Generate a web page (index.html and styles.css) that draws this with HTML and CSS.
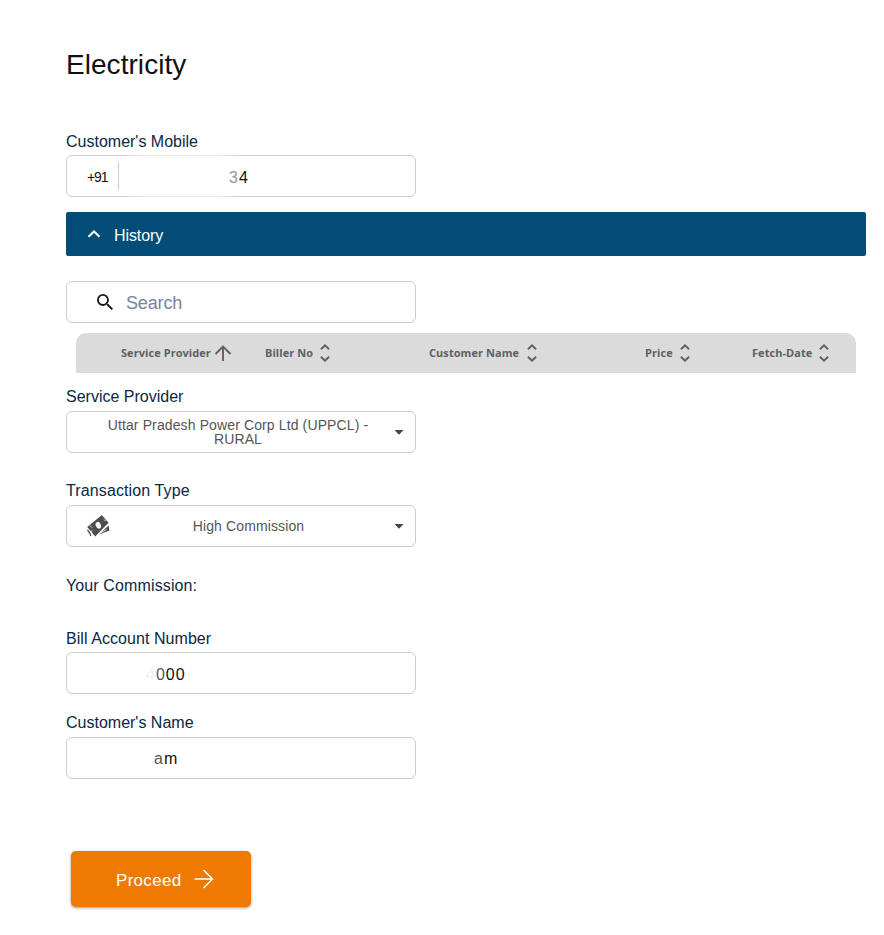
FILE: index.html
```html
<!DOCTYPE html>
<html lang="en">
<head>
<meta charset="utf-8">
<title>Electricity</title>
<link rel="stylesheet" href="styles.css">
</head>
<body>
<main class="page">
  <h1 class="title">Electricity</h1>

  <label class="label label-mobile">Customer's Mobile</label>
  <div class="field field-mobile">
    <span class="prefix">+91</span>
    <span class="value mobile-value"><span class="faded">3</span>4</span>
  </div>

  <div class="history">
    <svg class="chevron" viewBox="0 0 14 8"><path d="M1.500 6.700 7 1.500l5.500 5.200" fill="none" stroke="#fff" stroke-width="2"/></svg>
    <span>History</span>
  </div>

  <div class="field search">
    <svg class="search-icon" viewBox="3 3 17.500 17.500"><path fill="#15181f" d="M15.500 14h-.79l-.28-.27A6.471 6.471 0 0 0 16 9.500 6.500 6.500 0 1 0 9.500 16c1.610 0 3.090-.59 4.230-1.570l.27.28v.79l5 4.990L20.490 19l-4.990-5zm-6 0C7.010 14 5 11.990 5 9.500S7.010 5 9.500 5 14 7.010 14 9.500 11.990 14 9.500 14z"/></svg>
    <span class="placeholder">Search</span>
  </div>

  <div class="table-head">
    <div class="col col-provider"><span>Service Provider</span><svg class="arrow-up" viewBox="0 0 18 16"><path d="M9 16V1.500M1.500 9 9 1.500 16.500 9" fill="none" stroke="#606060" stroke-width="1.900"/></svg></div>
    <div class="col col-biller"><span>Biller No</span><svg class="sort" viewBox="0 0 10 18"><path d="M.9 5.200 5 1.300l4.100 3.900M.9 12.800 5 16.700l4.100-3.900" fill="none" stroke="#606060" stroke-width="1.900"/></svg></div>
    <div class="col col-name"><span>Customer Name</span><svg class="sort" viewBox="0 0 10 18"><path d="M.9 5.200 5 1.300l4.100 3.900M.9 12.800 5 16.700l4.100-3.900" fill="none" stroke="#606060" stroke-width="1.900"/></svg></div>
    <div class="col col-price"><span>Price</span><svg class="sort" viewBox="0 0 10 18"><path d="M.9 5.200 5 1.300l4.100 3.900M.9 12.800 5 16.700l4.100-3.900" fill="none" stroke="#606060" stroke-width="1.900"/></svg></div>
    <div class="col col-date"><span>Fetch-Date</span><svg class="sort" viewBox="0 0 10 18"><path d="M.9 5.200 5 1.300l4.100 3.900M.9 12.800 5 16.700l4.100-3.900" fill="none" stroke="#606060" stroke-width="1.900"/></svg></div>
  </div>

  <label class="label label-provider">Service Provider</label>
  <div class="field select">
    <span class="select-text provider-text">Uttar Pradesh Power Corp Ltd (UPPCL) -<br>RURAL</span>
    <svg class="caret" viewBox="0 0 10 5"><path d="M.5 0h9L5 4.800z" fill="#454545"/></svg>
  </div>

  <label class="label label-type">Transaction Type</label>
  <div class="field select">
    <svg class="cash" viewBox="0 0 24 24">
      <path fill="#4d4d4d" d="M22.500 11.500 23.500 16.500 13 20.500z"/>
      <path fill="#4d4d4d" stroke="#fff" stroke-width=".5" d="M15.800.8 22.800 8.800 9.200 22.800 1 13z"/>
      <path fill="none" stroke="#fff" stroke-width=".8" d="m14.500 19 6-3.500M4 11.500l2 2.200M18 5.500l1.300 1.500M3.500 18.500l3-2"/>
      <path fill="none" stroke="#4d4d4d" stroke-width="1.300" d="M1.500 16 4 19.500 4.800 22"/>
      <ellipse cx="12.300" cy="11.300" rx="2.500" ry="3.500" transform="rotate(-25 12.300 11.300)" fill="#fff"/>
    </svg>
    <span class="select-text type-text">High Commission</span>
    <svg class="caret" viewBox="0 0 10 5"><path d="M.5 0h9L5 4.800z" fill="#454545"/></svg>
  </div>

  <p class="label label-commission">Your Commission:</p>

  <label class="label label-bill">Bill Account Number</label>
  <div class="field">
    <span class="value bill-value"><span class="trace">4</span><span class="leading">0</span>00</span>
  </div>

  <label class="label label-name">Customer's Name</label>
  <div class="field">
    <span class="value name-value"><span class="leading">a</span>m</span>
  </div>

  <button class="proceed" type="button">
    <span>Proceed</span>
    <svg class="arrow-right" viewBox="0 0 20 20"><path d="M.5 10h17.800M9.500 1 18.500 10l-9 9" fill="none" stroke="#fff" stroke-width="1.500"/></svg>
  </button>
</main>
</body>
</html>
```
FILE: styles.css
```css
* { box-sizing: border-box; }
body {
  margin: 0;
  background: #fff;
  color: #111;
  font-family: "Liberation Sans", Arial, sans-serif;
}
svg { display: block; flex: none; }
.page {
  display: flex;
  flex-direction: column;
  align-items: flex-start;
  height: 935px;
  padding: 45px 18px 0 66px;
  overflow: hidden;
}
.title { margin: 0; height: 40px; font-size: 28px; font-weight: 400; line-height: 40px; letter-spacing: 0.05px; }
.label { margin: 0; height: 20px; color: #0c2742; font-size: 16px; line-height: 20px; white-space: nowrap; }
.label-mobile { margin: 47px 0 3px; }
.label-provider { margin: 14px 0 4px; }
.label-type { margin: 28px 0 4px; letter-spacing: 0.12px; }
.label-commission { margin-top: 29px; letter-spacing: 0.12px; }
.label-bill { margin: 33px 0 3px; letter-spacing: 0.06px; }
.label-name { margin: 19px 0 4px; }
.field {
  display: flex;
  align-items: center;
  flex: none;
  width: 350px;
  height: 42px;
  border: 1px solid #ccc;
  border-radius: 6px;
  background: #fff;
}
/* Soft fade along the field's edges behind the number */
.field-mobile { position: relative; }
.field-mobile::before,
.field-mobile::after {
  content: "";
  position: absolute;
  left: 52px;
  width: 125px;
  height: 1px;
  background: linear-gradient(90deg, transparent, rgba(255, 255, 255, .55) 20%, rgba(255, 255, 255, .55) 80%, transparent);
}
.field-mobile::before { top: -1px; }
.field-mobile::after { bottom: -1px; }
.prefix {
  display: flex;
  align-items: center;
  width: 52px;
  height: 28px;
  padding: 2px 0 0 20px;
  border-right: 1px solid #ccc;
  font-size: 14px;
  letter-spacing: -1.1px;
}
.value { padding-top: 4px; font-size: 16px; letter-spacing: 1px; }
.mobile-value { margin-left: 110px; }
.bill-value { margin-left: 79px; }
.name-value { padding-top: 2px; margin-left: 87px; }
.faded { color: #999; }
.leading { color: #555; }
.trace { color: #f1f1f1; }
.history {
  display: flex;
  align-items: center;
  width: 800px;
  height: 44px;
  margin: 15px 0 25px;
  padding: 4px 0 0 21px;
  border-radius: 2px;
  background: #024d78;
  color: #fff;
  font-size: 16px;
  letter-spacing: -0.1px;
}
.chevron { width: 14px; height: 8px; margin: -4px 13px 0 0; }
.search { padding-left: 30px; }
.search-icon { width: 16px; height: 16px; margin: -1px 13px 0 0; }
.placeholder { padding-top: 2px; color: #75839f; font-size: 18px; letter-spacing: -0.15px; }
.table-head {
  display: grid;
  grid-template-columns: 189px 164px 216px 107px 104px;
  width: 780px;
  height: 40px;
  margin: 10px 0 0 10px;
  border-radius: 10px 10px 0 0;
  background: #dbdbdb;
  color: #606060;
  font: 700 11px "Open Sans", "Noto Sans", sans-serif;
  letter-spacing: 0.06px;
}
.col { display: flex; align-items: center; white-space: nowrap; }
.col span { margin-top: -2px; }
.col-provider { padding-left: 45px; }
.arrow-up { width: 18px; height: 16px; margin-left: 3px; }
.sort { width: 10px; height: 18px; margin-left: 7px; }
.col-name .sort { margin-left: 8px; }
.select { padding-right: 11px; }
.select-text { flex: 1; color: #555; font-size: 14px; line-height: 14px; letter-spacing: 0.12px; text-align: center; white-space: nowrap; }
.provider-text { padding-left: 15px; }
.type-text { padding-right: 7px; }
.caret { width: 10px; height: 5px; margin-top: 1px; }
.cash { width: 24px; height: 24px; margin-left: 19px; }
.proceed {
  display: flex;
  align-items: center;
  width: 180px;
  height: 56px;
  margin: 72px 0 0 5px;
  padding: 2px 0 0 45px;
  border: 0;
  border-radius: 5px;
  background: #ee7a03;
  box-shadow: 0 1px 3px rgba(0, 0, 0, .4);
  color: #fff;
  font: 17px "Liberation Sans", Arial, sans-serif;
  letter-spacing: 0.3px;
}
.proceed span { padding-top: 1px; }
.arrow-right { width: 20px; height: 20px; margin: -3px 0 0 13px; }
```
